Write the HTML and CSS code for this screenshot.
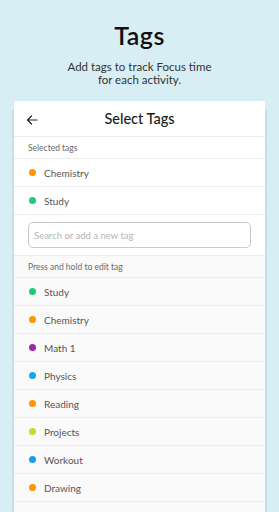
FILE: index.html
```html
<!DOCTYPE html>
<html>
<head>
<meta charset="utf-8">
<link rel="stylesheet" href="styles.css">
</head>
<body>
<div class="hero">
  <h1 class="title">Tags</h1>
  <p class="subtitle">Add tags to track Focus time<br>for each activity.</p>
</div>
<div class="phone">
  <div class="header">
    <svg class="back" width="12" height="10" viewBox="0 0 12 10"><path d="M11 5H1.5M5.5 1L1.5 5l4 4" fill="none" stroke="#222" stroke-width="1.2" stroke-linecap="round" stroke-linejoin="round"/></svg>
    <span class="header-title">Select Tags</span>
  </div>
  <div class="section-label">Selected tags</div>
  <div class="row"><span class="dot orange"></span>Chemistry</div>
  <div class="row"><span class="dot green"></span>Study</div>
  <div class="search-wrap">
    <div class="search">Search or add a new tag</div>
  </div>
  <div class="list">
    <div class="section-label">Press and hold to edit tag</div>
    <div class="row"><span class="dot green"></span>Study</div>
    <div class="row"><span class="dot orange"></span>Chemistry</div>
    <div class="row"><span class="dot purple"></span>Math 1</div>
    <div class="row"><span class="dot lightblue"></span>Physics</div>
    <div class="row"><span class="dot orange"></span>Reading</div>
    <div class="row"><span class="dot lime"></span>Projects</div>
    <div class="row"><span class="dot blue"></span>Workout</div>
    <div class="row"><span class="dot orange"></span>Drawing</div>
    <div class="row"></div>
  </div>
</div>
</body>
</html>
```
FILE: styles.css
```css
html, body {
  margin: 0;
  padding: 0;
}
body {
  width: 279px;
  height: 512px;
  overflow: hidden;
  background: #d8eef5;
  font-family: Lato, "Noto Sans", sans-serif;
}
.hero {
  text-align: center;
  padding-top: 21px;
  height: 80px;
}
.title {
  margin: 0;
  font-size: 25px;
  line-height: 28px;
  font-weight: 600;
  color: #111;
  letter-spacing: 0.5px;
}
.subtitle {
  margin: 11px 0 0;
  font-size: 11.5px;
  line-height: 13px;
  color: #333;
}
.phone {
  margin: 0 14px;
  background: #fff;
  box-shadow: 0 11px 0 2px #c4dfe7;
}
.header {
  height: 35px;
  border-bottom: 1px solid #ececec;
  display: flex;
  align-items: center;
  justify-content: center;
  position: relative;
}
.back {
  position: absolute;
  left: 12px;
  top: 14px;
}
.header-title {
  font-size: 14.5px;
  font-weight: 500;
  color: #1a1a1a;
}
.section-label {
  height: 21px;
  line-height: 22px;
  padding-left: 14px;
  font-size: 8.5px;
  color: #6a6a6a;
  border-bottom: 1px solid #ececec;
}
.row {
  height: 27px;
  border-bottom: 1px solid #ececec;
  display: flex;
  align-items: center;
  padding-left: 15px;
  font-size: 10px;
  color: #555;
}
.dot {
  width: 7px;
  height: 7px;
  border-radius: 50%;
  margin-right: 8px;
}
.orange { background: #ff9500; }
.green { background: #1ccd76; }
.purple { background: #9b27af; }
.lightblue { background: #10a8f2; }
.lime { background: #c8da2b; }
.blue { background: #1e9bf0; }
.search-wrap {
  height: 41px;
  padding: 7px 14px 0;
  box-sizing: border-box;
  border-bottom: 1px solid #ececec;
}
.search {
  height: 26px;
  box-sizing: border-box;
  border: 1px solid #c9c9c9;
  border-radius: 5px;
  padding-left: 5px;
  display: flex;
  align-items: center;
  font-size: 9.5px;
  color: #b5b5b5;
}
.list {
  background: #fafafa;
}
```
